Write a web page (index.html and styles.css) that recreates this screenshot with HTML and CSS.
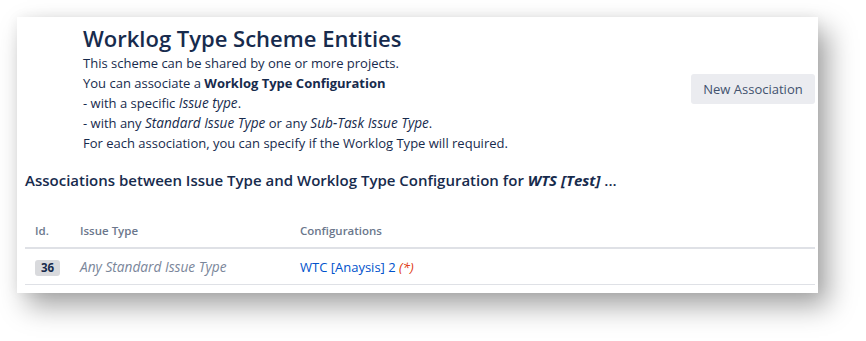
FILE: index.html
```html
<!DOCTYPE html>
<html>
<head>
<meta charset="utf-8">
<link rel="stylesheet" href="styles.css">
</head>
<body>
<div class="page">
<div class="card">
  <div class="top">
    <div class="intro">
      <h1 class="title">Worklog Type Scheme Entities</h1>
      <p class="line">This scheme can be shared by one or more projects.</p>
      <p class="line">You can associate a <b>Worklog Type Configuration</b></p>
      <p class="line">- with a specific <i>Issue type</i>.</p>
      <p class="line">- with any <i>Standard Issue Type</i> or any <i>Sub-Task Issue Type</i>.</p>
      <p class="line">For each association, you can specify if the Worklog Type will required.</p>
    </div>
    <button class="btn">New Association</button>
  </div>
  <h2 class="sub">Associations between Issue Type and Worklog Type Configuration for <b><i>WTS [Test]</i></b> ...</h2>
  <table class="tbl">
    <thead>
      <tr><th class="c-id">Id.</th><th class="c-type">Issue Type</th><th>Configurations</th></tr>
    </thead>
    <tbody>
      <tr>
        <td class="c-id"><span class="badge">36</span></td>
        <td class="c-type"><i class="muted">Any Standard Issue Type</i></td>
        <td><a class="link" href="#">WTC [Anaysis] 2</a> <i class="req">(*)</i></td>
      </tr>
    </tbody>
  </table>
</div>
</div>
</body>
</html>
```
FILE: styles.css
```css
html, body {
  margin: 0;
  padding: 0;
  background: #ffffff;
}
body {
  font-family: "Open Sans", "Noto Sans", sans-serif;
  color: #172b4d;
}
.page {
  box-sizing: border-box;
  height: 341px;
  padding: 17px 0 0 17px;
}
.card {
  width: 801px;
  height: 276px;
  box-sizing: border-box;
  background: #fff;
  padding: 6px 3px 0 8px;
  box-shadow: 10px 13px 26px rgba(0,0,0,0.36), 0 0 12px rgba(0,0,0,0.05);
}
.top {
  display: flex;
  align-items: center;
  justify-content: space-between;
}
.intro {
  margin-left: 58px;
}
.title {
  margin: 0;
  font-size: 22px;
  font-weight: 600;
  line-height: 30px;
  color: #172b4d;
}
.line {
  margin: 0;
  font-size: 13px;
  line-height: 20px;
}
.line b { font-weight: 700; }
.line i { font-size: 13.6px; }
.btn {
  font-family: inherit;
  font-size: 13px;
  color: #42526e;
  background: #ebecf0;
  border: none;
  border-radius: 3px;
  width: 124px;
  height: 30px;
  padding: 0;
  margin-top: 1px;
}
.sub {
  margin: 16px 0 0 0;
  font-size: 15px;
  font-weight: 600;
  line-height: 22px;
  color: #172b4d;
}
.sub b { font-weight: 700; }
.tbl {
  margin-top: 26px;
  width: 100%;
  border-collapse: collapse;
  table-layout: fixed;
}
.tbl th {
  text-align: left;
  font-size: 11.5px;
  font-weight: 600;
  color: #6b778c;
  padding: 6px 10px 9px 10px;
  border-bottom: 2px solid #dfe1e6;
}
.tbl td {
  text-align: left;
  font-size: 13px;
  padding: 8px 10px 8px 10px;
  border-bottom: 1px solid #dfe1e6;
  white-space: nowrap;
}
.c-id { width: 25px; }
.c-type { width: 200px; }
.badge {
  display: inline-block;
  background: #d9dadd;
  color: #172b4d;
  font-size: 11.5px;
  font-weight: 700;
  border-radius: 3px;
  padding: 0 6px;
  line-height: 16px;
}
.muted {
  color: #7a869a;
  font-size: 13.7px;
}
.link {
  color: #0052cc;
  text-decoration: none;
}
.req { color: #de350b; }
```
